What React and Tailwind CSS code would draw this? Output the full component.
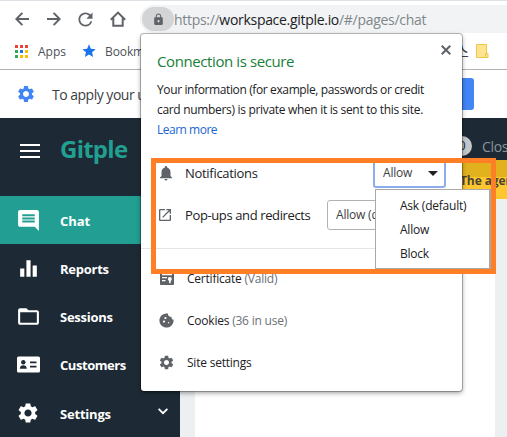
import React from "react";
import {
  MdRefresh, MdLock, MdStar, MdSettings, MdComment,
  MdEqualizer, MdFolderOpen, MdNotifications, MdOpenInNew, MdCookie,
} from "react-icons/md";

const appDots = [
  "bg-[#ea4335]", "bg-[#ea4335]", "bg-[#ea4335]",
  "bg-[#34a853]", "bg-[#1a73e8]", "bg-[#fbbc04]",
  "bg-[#34a853]", "bg-[#fbbc04]", "bg-[#fbbc04]",
];

function ArrowIcon({ className }) {
  return (
    <svg width="14" height="14" viewBox="0 0 14 14" fill="none" stroke="#5f6368" strokeWidth="2" className={className}>
      <path d="M14 7H1.6M7.4 0.9 1.3 7l6.1 6.1" />
    </svg>
  );
}

function CloseIcon() {
  return (
    <svg width="10" height="10" viewBox="0 0 10 10" fill="none" stroke="#5f6368" strokeWidth="2">
      <path d="M.7.7l8.6 8.6M9.3.7L.7 9.3" />
    </svg>
  );
}

function ChevronIcon() {
  return (
    <svg width="10" height="7" viewBox="0 0 10 7" fill="none" stroke="#fff" strokeWidth="1.8">
      <path d="M.6.8 5 5.2 9.4.8" />
    </svg>
  );
}

function HomeIcon() {
  return (
    <svg width="16" height="16" viewBox="0 0 16 16" fill="none" stroke="#5f6368" strokeWidth="2">
      <path d="M0.8 8.7 8 1.6l7.2 7.1M3.3 7.2V14.8h9.4V7.2" />
    </svg>
  );
}

function CardIcon() {
  return (
    <svg width="23" height="17" viewBox="0 0 23 17">
      <rect x="0" y="0.5" width="23" height="16" rx="1.6" fill="#fff" />
      <g fill="#1d2a35">
        <circle cx="6.3" cy="6.3" r="2.2" />
        <path d="M2.8 12.8c0-2.6 1.6-3.6 3.5-3.6s3.5 1 3.5 3.6z" />
        <path d="M13 5.5h6.5v1.7H13zM13 9.8h6.5v1.7H13z" />
      </g>
    </svg>
  );
}

function CertificateIcon() {
  return (
    <svg width="14" height="14" viewBox="0 0 14 14">
      <rect x="0" y="0" width="14" height="14" rx="1" fill="#5f6368" />
      <path d="M2 3h10v1.3H2zM2 6h5v1.2H2zM2 9h3.5v1.2H2z" fill="#fff" />
      <circle cx="9.8" cy="8" r="2" fill="#fff" />
      <path d="M9 9h1.7v3.5l-.85-.8-.85.8z" fill="#fff" />
    </svg>
  );
}

const navItems = [
  { label: "Chat", icon: <MdComment size={25} />, active: true, track: "tracking-[-0.1px]" },
  { label: "Reports", icon: <MdEqualizer size={25} />, track: "tracking-[-0.25px]" },
  { label: "Sessions", icon: <MdFolderOpen size={25} />, track: "tracking-[-0.25px]" },
  { label: "Customers", icon: <CardIcon />, track: "tracking-[-0.45px]" },
  { label: "Settings", icon: <MdSettings size={24} />, track: "tracking-[-0.2px]", more: true },
];

function Toolbar() {
  return (
    <div className="flex h-[33px] shrink-0 border-t border-[#dee1e6] bg-white pt-1 text-[#5f6368]">
      <div className="flex w-[140px] shrink-0 items-center pl-[15px]">
        <ArrowIcon className="shrink-0" />
        <ArrowIcon className="ml-[18px] shrink-0 rotate-180" />
        <MdRefresh size={21} className="ml-[14px] shrink-0" />
        <div className="ml-[14px]"><HomeIcon /></div>
      </div>
      <div className="flex h-[28px] flex-1 items-center rounded-l-full bg-[#f1f3f4] pl-[2px]">
        <div className="flex h-[24px] w-[32px] shrink-0 items-center justify-center rounded-full bg-[#d2d4d5]">
          <MdLock size={13} />
        </div>
        <div className="whitespace-nowrap text-[14px] tracking-[-0.3px] text-[#80868b]">
          https://<span className="text-[#202124]">workspace.gitple.io</span>/#/pages/chat
        </div>
      </div>
    </div>
  );
}

function Bookmarks() {
  return (
    <div className="flex h-[37px] shrink-0 items-center border-b border-[#b3b3b3] bg-white pl-[15px] text-[12px] text-[#4d5156]">
      <div className="grid shrink-0 grid-cols-3 gap-[2px]">
        {appDots.map((c, i) => <span key={i} className={"size-[3px] " + c} />)}
      </div>
      <span className="ml-[10px] w-[43px] shrink-0 pt-px">Apps</span>
      <MdStar size={16} className="shrink-0 text-[#1a73e8]" />
      <span className="ml-[8px] w-[350px] shrink-0 pt-px tracking-[-0.1px]">Bookmarks</span>
      <span className="w-[22px] shrink-0 text-[15px] text-[#3c4043]" style={{ fontFamily: '"Noto Sans CJK KR", sans-serif' }}>스</span>
      <svg width="13" height="15" viewBox="0 0 13 15" className="shrink-0 -ml-px">
        <path d="M.5.5h10v9h1.5v4H.5z" fill="#ffe48f" stroke="#edc64f" />
        <path d="M9.5 13.5v-4h2" fill="none" stroke="#edc64f" />
      </svg>
    </div>
  );
}

function Sidebar() {
  return (
    <div className="w-[180px] shrink-0 bg-[#1d2a35] text-white">
      <div className="flex h-[78px] pl-5 pt-[26px]">
        <div className="flex h-[14px] w-5 flex-col justify-between">
          <span className="h-[2px] bg-white" />
          <span className="h-[2px] bg-white" />
          <span className="h-[2px] bg-white" />
        </div>
        <div className="ml-5 -mt-[13px] text-[24px] leading-[36px] font-bold tracking-[-0.75px] text-[#219f91]">Gitple</div>
      </div>
      {navItems.map((n) => (
        <div key={n.label} className={"flex h-[48.2px] items-center " + (n.active ? "bg-[#229f92]" : "")}>
          <div className="flex w-[57px] shrink-0 justify-center pr-px">{n.icon}</div>
          <div className={"ml-[3px] w-[92px] pt-[3px] text-[13px] font-bold " + n.track}>{n.label}</div>
          {n.more && <div className="ml-[6px] -mt-[2px]"><ChevronIcon /></div>}
        </div>
      ))}
    </div>
  );
}

function Row({ icon, label, note }) {
  return (
    <div className="flex h-[42px] items-center text-[12px] text-[#202124]">
      <div className="flex w-[29px] shrink-0 text-[#5f6368]">{icon}</div>
      <div className="whitespace-nowrap pt-px tracking-[-0.22px]">{label} {note && <span className="text-[#6c7075]">{note}</span>}</div>
    </div>
  );
}

function Popup() {
  return (
    <div className="absolute left-[141px] top-[34px] h-[357px] w-[321px] rounded-[3px] bg-white shadow-[0_0_0_1px_rgba(0,0,0,0.25),0_2px_5px_rgba(0,0,0,0.4)]">
      <div className="flex justify-between pl-4 pr-[11px] pt-[8px]">
        <h1 className="pt-[9px] text-[15px] leading-[20px] tracking-[-0.4px] text-[#188038]">Connection is secure</h1>
        <div className="pt-[3px]"><CloseIcon /></div>
      </div>
      <p className="h-[61px] whitespace-nowrap pl-4 pt-[9px] text-[12px] leading-[20px] tracking-[-0.38px] text-[#202124]">
        Your information (for example, passwords or credit<br />
        <span className="tracking-[-0.32px]">card numbers) is private when it is sent to this site.</span><br />
        <span className="tracking-[-0.5px] text-[#1967d2]">Learn more</span>
      </p>
      <div className="mt-[20px] flex h-[42px] items-center pl-4 text-[13px] text-[#202124]">
        <MdNotifications size={18} className="shrink-0 text-[#5f6368]" />
        <span className="ml-[10px] w-[188px] shrink-0 pt-px tracking-[-0.3px]">Notifications</span>
        <div className="flex h-[30px] w-[73px] items-center justify-between rounded-[3px] border-2 border-[#8cacea] pl-[8px] pr-[6px] text-[12px] tracking-[-0.2px] text-[#3c4043]">
          Allow
          <span className="border-x-[5px] border-t-[5px] border-x-transparent border-t-[#202124]" />
        </div>
      </div>
      <div className="flex h-[42px] items-center pl-4 text-[13px] text-[#202124]">
        <MdOpenInNew size={16} className="shrink-0 text-[#5f6368]" />
        <span className="ml-3 w-[142px] shrink-0 whitespace-nowrap pt-px tracking-[-0.38px]">Pop-ups and redirects</span>
        <div className="flex h-[30px] w-[119px] items-center rounded-[3px] border border-[#b0b2b5] pl-2 text-[12px] tracking-[-0.2px] text-[#3c4043]">Allow (default)</div>
      </div>
      <div className="mt-[12px] border-t border-[#e3e5e8] pl-[17px] pt-[8px]">
        <Row icon={<span className="pl-[2px]"><CertificateIcon /></span>} label="Certificate" note="(Valid)" />
        <Row icon={<MdCookie size={17} />} label="Cookies" note="(36 in use)" />
        <Row icon={<MdSettings size={17} />} label="Site settings" />
      </div>
    </div>
  );
}

export default function App() {
  return (
    <div className="relative flex h-[437px] w-[507px] flex-col overflow-hidden bg-white" style={{ fontFamily: '"Open Sans", "Noto Sans", sans-serif' }}>
      <Toolbar />
      <Bookmarks />
      <div className="flex h-[48px] shrink-0 items-center pl-[16px] text-[14px] text-[#3c4043]">
        <MdSettings size={20} className="shrink-0 text-[#4285f4]" />
        <span className="ml-4 w-[322px] shrink-0 whitespace-nowrap tracking-[-0.5px]">To apply your updated</span>
        <span className="h-8 w-[100px] shrink-0 rounded-[3px] bg-[#4285f4]" />
      </div>
      <div className="flex h-[319px] shrink-0">
        <Sidebar />
        <div className="flex w-[327px] shrink-0 flex-col overflow-hidden bg-[#ecf0f1]">
          <div className="flex h-[42px] shrink-0 items-center bg-[#1d2a35] pl-[272px] pt-[14px]">
            <span className="flex size-5 shrink-0 items-center justify-center rounded-full bg-[#c5c8ca] text-[13px] text-[#1d2a35]">0</span>
            <span className="ml-[10px] text-[14px] tracking-[-0.3px] text-[#8b9299]">Closed</span>
          </div>
          <div className="h-[39px] shrink-0 whitespace-nowrap bg-[linear-gradient(#e2b11e_0_17px,#fec72f_17px)] pl-[280px] pt-[11px] text-[12px] leading-[20px] font-bold tracking-[-0.1px] text-[#4c4433]">The agent</div>
          <div className="ml-[15px] w-[300px] flex-1 bg-white" />
        </div>
      </div>
      <Popup />
      <div className="absolute left-[151px] top-[158px] h-[116px] w-[345px] border-[5px] border-[#ff7f27]" />
      <div className="absolute left-[375px] top-[189px] flex h-[80px] w-[116px] flex-col border border-r-2 border-[#a9a9a9] bg-white pl-6 pt-[4px] text-[12px] leading-[24px] tracking-[-0.22px] text-[#202124]">
        <span>Ask (default)</span>
        <span>Allow</span>
        <span>Block</span>
      </div>
    </div>
  );
}
